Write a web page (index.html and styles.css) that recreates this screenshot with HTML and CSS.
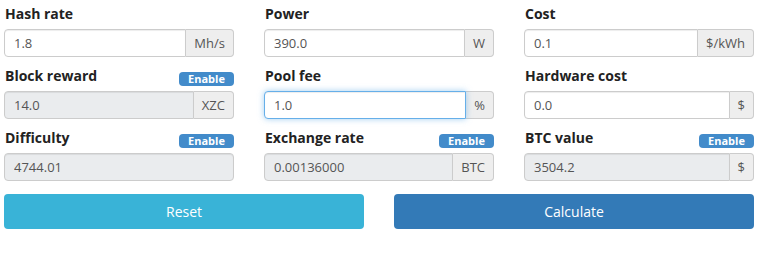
FILE: index.html
```html
<!DOCTYPE html>
<html lang="en">
<head>
  <meta charset="UTF-8" />
  <title>Mining Calculator</title>
  <link rel="stylesheet" href="styles.css">
</head>
<body>
  <form class="calc">
    <div class="fields">
      <div class="field">
        <div class="label-row"><label>Hash rate</label></div>
        <div class="input-group">
          <input type="text" value="1.8">
          <span class="addon">Mh/s</span>
        </div>
      </div>
      <div class="field">
        <div class="label-row"><label>Power</label></div>
        <div class="input-group">
          <input type="text" value="390.0">
          <span class="addon">W</span>
        </div>
      </div>
      <div class="field">
        <div class="label-row"><label>Cost</label></div>
        <div class="input-group">
          <input type="text" value="0.1">
          <span class="addon">$/kWh</span>
        </div>
      </div>

      <div class="field">
        <div class="label-row"><label>Block reward</label><span class="badge">Enable</span></div>
        <div class="input-group">
          <input type="text" value="14.0" disabled>
          <span class="addon">XZC</span>
        </div>
      </div>
      <div class="field">
        <div class="label-row"><label>Pool fee</label></div>
        <div class="input-group">
          <input type="text" value="1.0" class="focus" autofocus>
          <span class="addon">%</span>
        </div>
      </div>
      <div class="field">
        <div class="label-row"><label>Hardware cost</label></div>
        <div class="input-group">
          <input type="text" value="0.0">
          <span class="addon">$</span>
        </div>
      </div>

      <div class="field">
        <div class="label-row"><label>Difficulty</label><span class="badge">Enable</span></div>
        <div class="input-group">
          <input type="text" value="4744.01" disabled>
        </div>
      </div>
      <div class="field">
        <div class="label-row"><label>Exchange rate</label><span class="badge">Enable</span></div>
        <div class="input-group">
          <input type="text" value="0.00136000" disabled>
          <span class="addon">BTC</span>
        </div>
      </div>
      <div class="field">
        <div class="label-row"><label>BTC value</label><span class="badge">Enable</span></div>
        <div class="input-group">
          <input type="text" value="3504.2" disabled>
          <span class="addon">$</span>
        </div>
      </div>
    </div>

    <div class="actions">
      <button type="button" class="btn btn-reset">Reset</button>
      <button type="button" class="btn btn-calc">Calculate</button>
    </div>
  </form>
</body>
</html>
```

FILE: styles.css
```css
body {
  margin: 0;
  font-family: 'Open Sans', 'Noto Sans', sans-serif;
  color: #222;
  background: #fff;
}

.calc {
  width: 750px;
  padding: 4px 0 0 4px;
}

.fields {
  display: grid;
  grid-template-columns: repeat(3, 230px);
  column-gap: 30px;
  row-gap: 9px;
}

.label-row {
  display: flex;
  justify-content: space-between;
  align-items: center;
  height: 20px;
  margin-bottom: 5px;
}

.label-row label {
  font-size: 14px;
  font-weight: bold;
  line-height: 20px;
  padding-left: 1px;
}

.badge {
  width: 55px;
  height: 14px;
  margin-top: 5px;
  line-height: 14px;
  font-size: 11px;
  font-weight: bold;
  text-align: center;
  color: #fff;
  background: #428bca;
  border-radius: 4px;
}

.input-group {
  display: flex;
  height: 28px;
}

.input-group input {
  flex: 1;
  min-width: 0;
  height: 28px;
  box-sizing: border-box;
  margin: 0;
  padding: 0 9px;
  font-family: inherit;
  font-size: 13px;
  color: #555;
  background: #fff;
  border: 1px solid #ccc;
  border-radius: 4px 0 0 4px;
  box-shadow: inset 0 1px 1px rgba(0, 0, 0, 0.075);
  outline: none;
}

.input-group input:only-child {
  border-radius: 4px;
}

.input-group input:disabled {
  background: #eaecee;
  color: #555;
}

.input-group input.focus,
.input-group input:focus {
  border-color: #66afe9;
  box-shadow: inset 0 1px 1px rgba(0, 0, 0, 0.075), 0 0 6px rgba(102, 175, 233, 0.6);
  position: relative;
  z-index: 1;
}

.addon {
  display: flex;
  align-items: center;
  padding: 0 8px;
  font-size: 13px;
  color: #555;
  background: #eee;
  border: 1px solid #ccc;
  border-left: none;
  border-radius: 0 4px 4px 0;
}

.actions {
  display: grid;
  grid-template-columns: 360px 360px;
  column-gap: 30px;
  margin-top: 13px;
}

.btn {
  height: 35px;
  font-family: inherit;
  font-size: 14px;
  color: #fff;
  border: none;
  border-radius: 4px;
  cursor: pointer;
}

.btn-reset { background: #39b3d7; }
.btn-calc  { background: #337ab7; }
```
